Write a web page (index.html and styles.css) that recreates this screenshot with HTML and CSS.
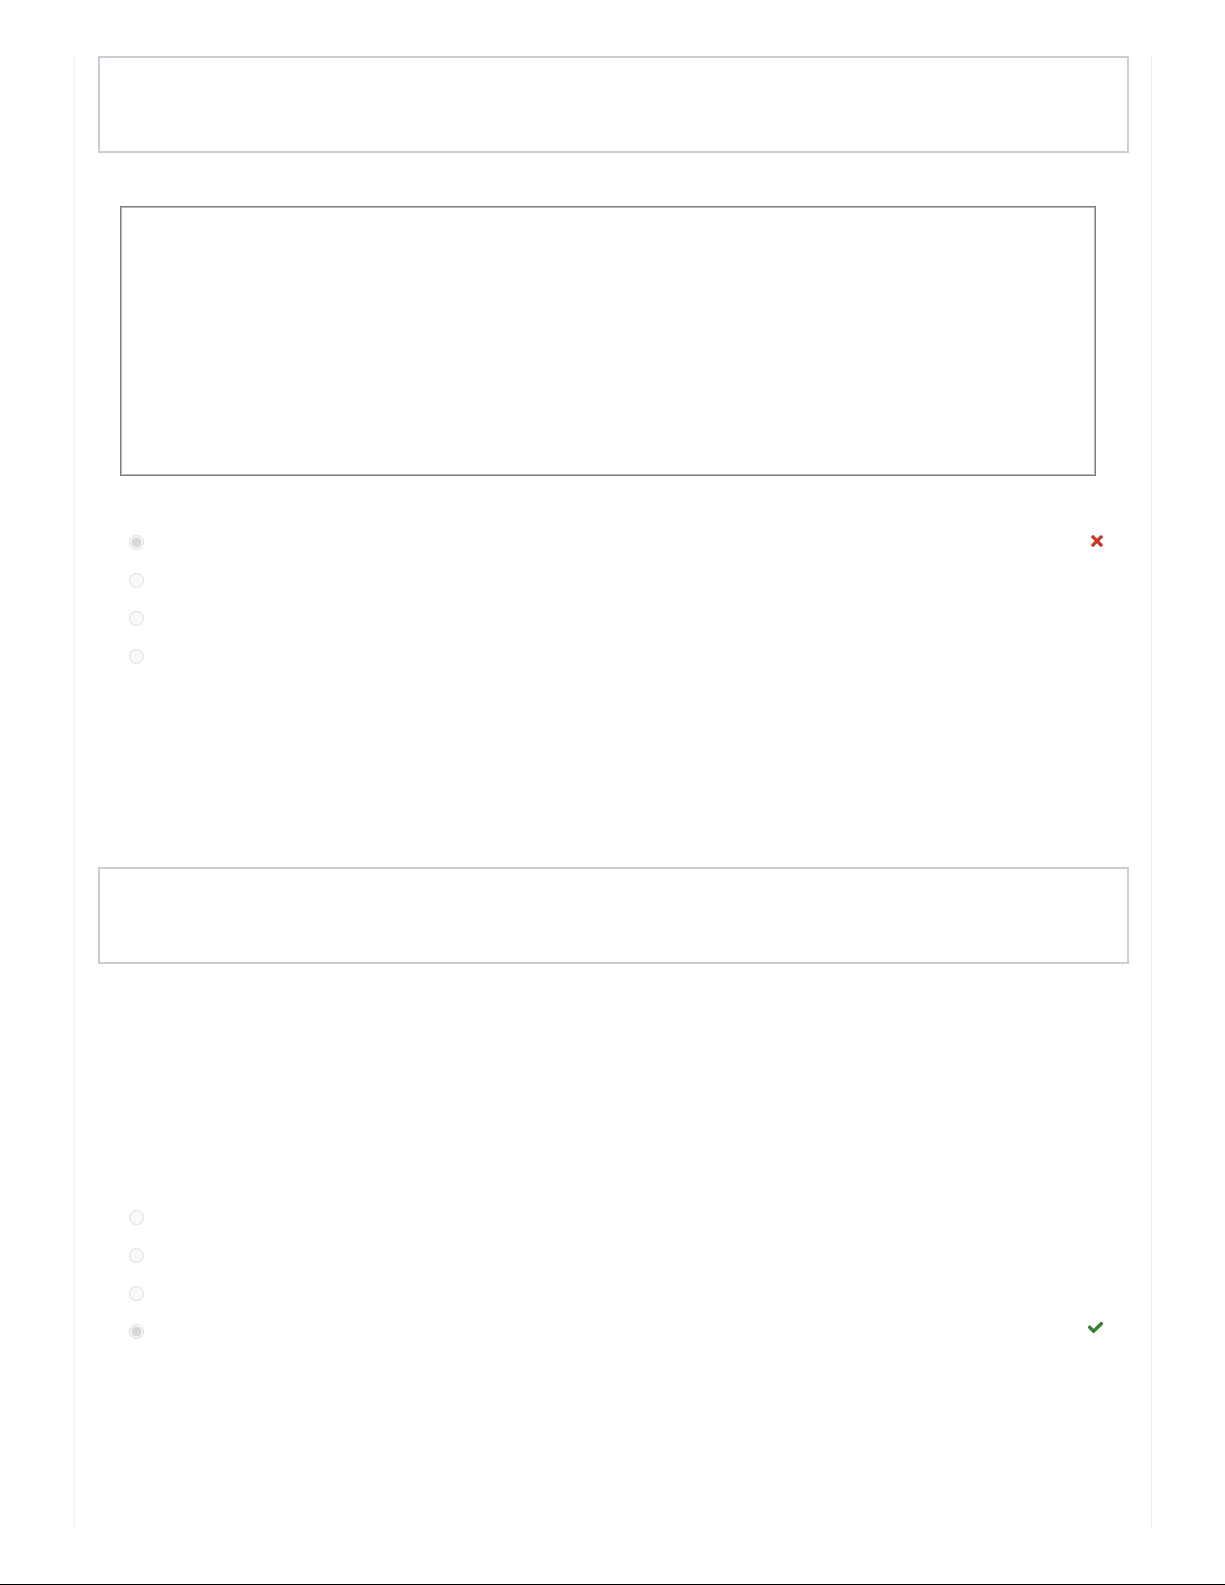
FILE: index.html
```html
<!DOCTYPE html>
<html lang="en">
<head>
    <meta charset="UTF-8">
    <meta name="viewport" content="width=device-width, initial-scale=1.0">
    <title>Quiz review</title>
    <link rel="stylesheet" href="styles.css">
</head>
<body>
    <div class="page">
        <div class="question q1">
            <div class="prompt"></div>
            <div class="figure"></div>
            <div class="answers first">
                <label class="option"><input type="radio" name="q1" disabled checked><span class="mark wrong">
                    <svg width="12" height="12" viewBox="0 0 12 12"><path d="M2 2L10 10M10 2L2 10" stroke="#c9352a" stroke-width="3.2" stroke-linecap="square" fill="none"/></svg>
                </span></label>
                <label class="option"><input type="radio" name="q1" disabled></label>
                <label class="option"><input type="radio" name="q1" disabled></label>
                <label class="option"><input type="radio" name="q1" disabled></label>
            </div>
        </div>

        <div class="question q2">
            <div class="prompt"></div>
            <div class="answers second">
                <label class="option"><input type="radio" name="q2" disabled></label>
                <label class="option"><input type="radio" name="q2" disabled></label>
                <label class="option"><input type="radio" name="q2" disabled></label>
                <label class="option"><input type="radio" name="q2" disabled checked><span class="mark right">
                    <svg width="15" height="11" viewBox="0 0 15 11"><path d="M1.8 5.4L5.6 9.2L13.4 1.6" stroke="#35802f" stroke-width="3.4" stroke-linecap="square" fill="none"/></svg>
                </span></label>
            </div>
        </div>
    </div>
    <div class="bottom-rule"></div>
</body>
</html>
```

FILE: styles.css
```css
body {
    font-family: "Liberation Sans", Arial, sans-serif;
    margin: 0;
    background: #fff;
    color: #333;
}
.page {
    box-sizing: border-box;
    width: 1078px;
    height: 1471px;
    margin: 56px 0 0 74px;
    padding: 0 22px 0 23px;
    border-left: 1px solid #ebebeb;
    border-right: 1px solid #ebebeb;
}
.prompt {
    box-sizing: border-box;
    height: 97px;
    border: 2px solid #c9ced5;
}
.figure {
    box-sizing: border-box;
    width: 976px;
    height: 270px;
    margin: 53px 0 0 22px;
    border: 1px solid #7c7c7c;
    box-shadow: inset 0 0 0 1px #b8b8b8;
}
.answers.first {
    margin-top: 47px;
}
.answers.second {
    margin-top: 234px;
}
.q2 {
    margin-top: 192px;
}
.option {
    display: flex;
    align-items: center;
    height: 38px;
}
.option input {
    -webkit-appearance: none;
    appearance: none;
    box-sizing: border-box;
    width: 15px;
    height: 15px;
    margin: 0 0 0 31px;
    border: 1px solid #dcdcdc;
    border-radius: 50%;
    background: #f9f9f9;
}
.option input:checked {
    background: radial-gradient(circle, #d8d8d8 0 4.5px, #f6f6f6 5.2px);
}
.mark {
    display: flex;
    margin-left: auto;
    margin-right: 26px;
}
.mark.wrong {
    margin-bottom: 3px;
}
.mark.right {
    margin-bottom: 7px;
}
.bottom-rule {
    height: 1px;
    margin-top: 57px;
    background: #000;
}
```
